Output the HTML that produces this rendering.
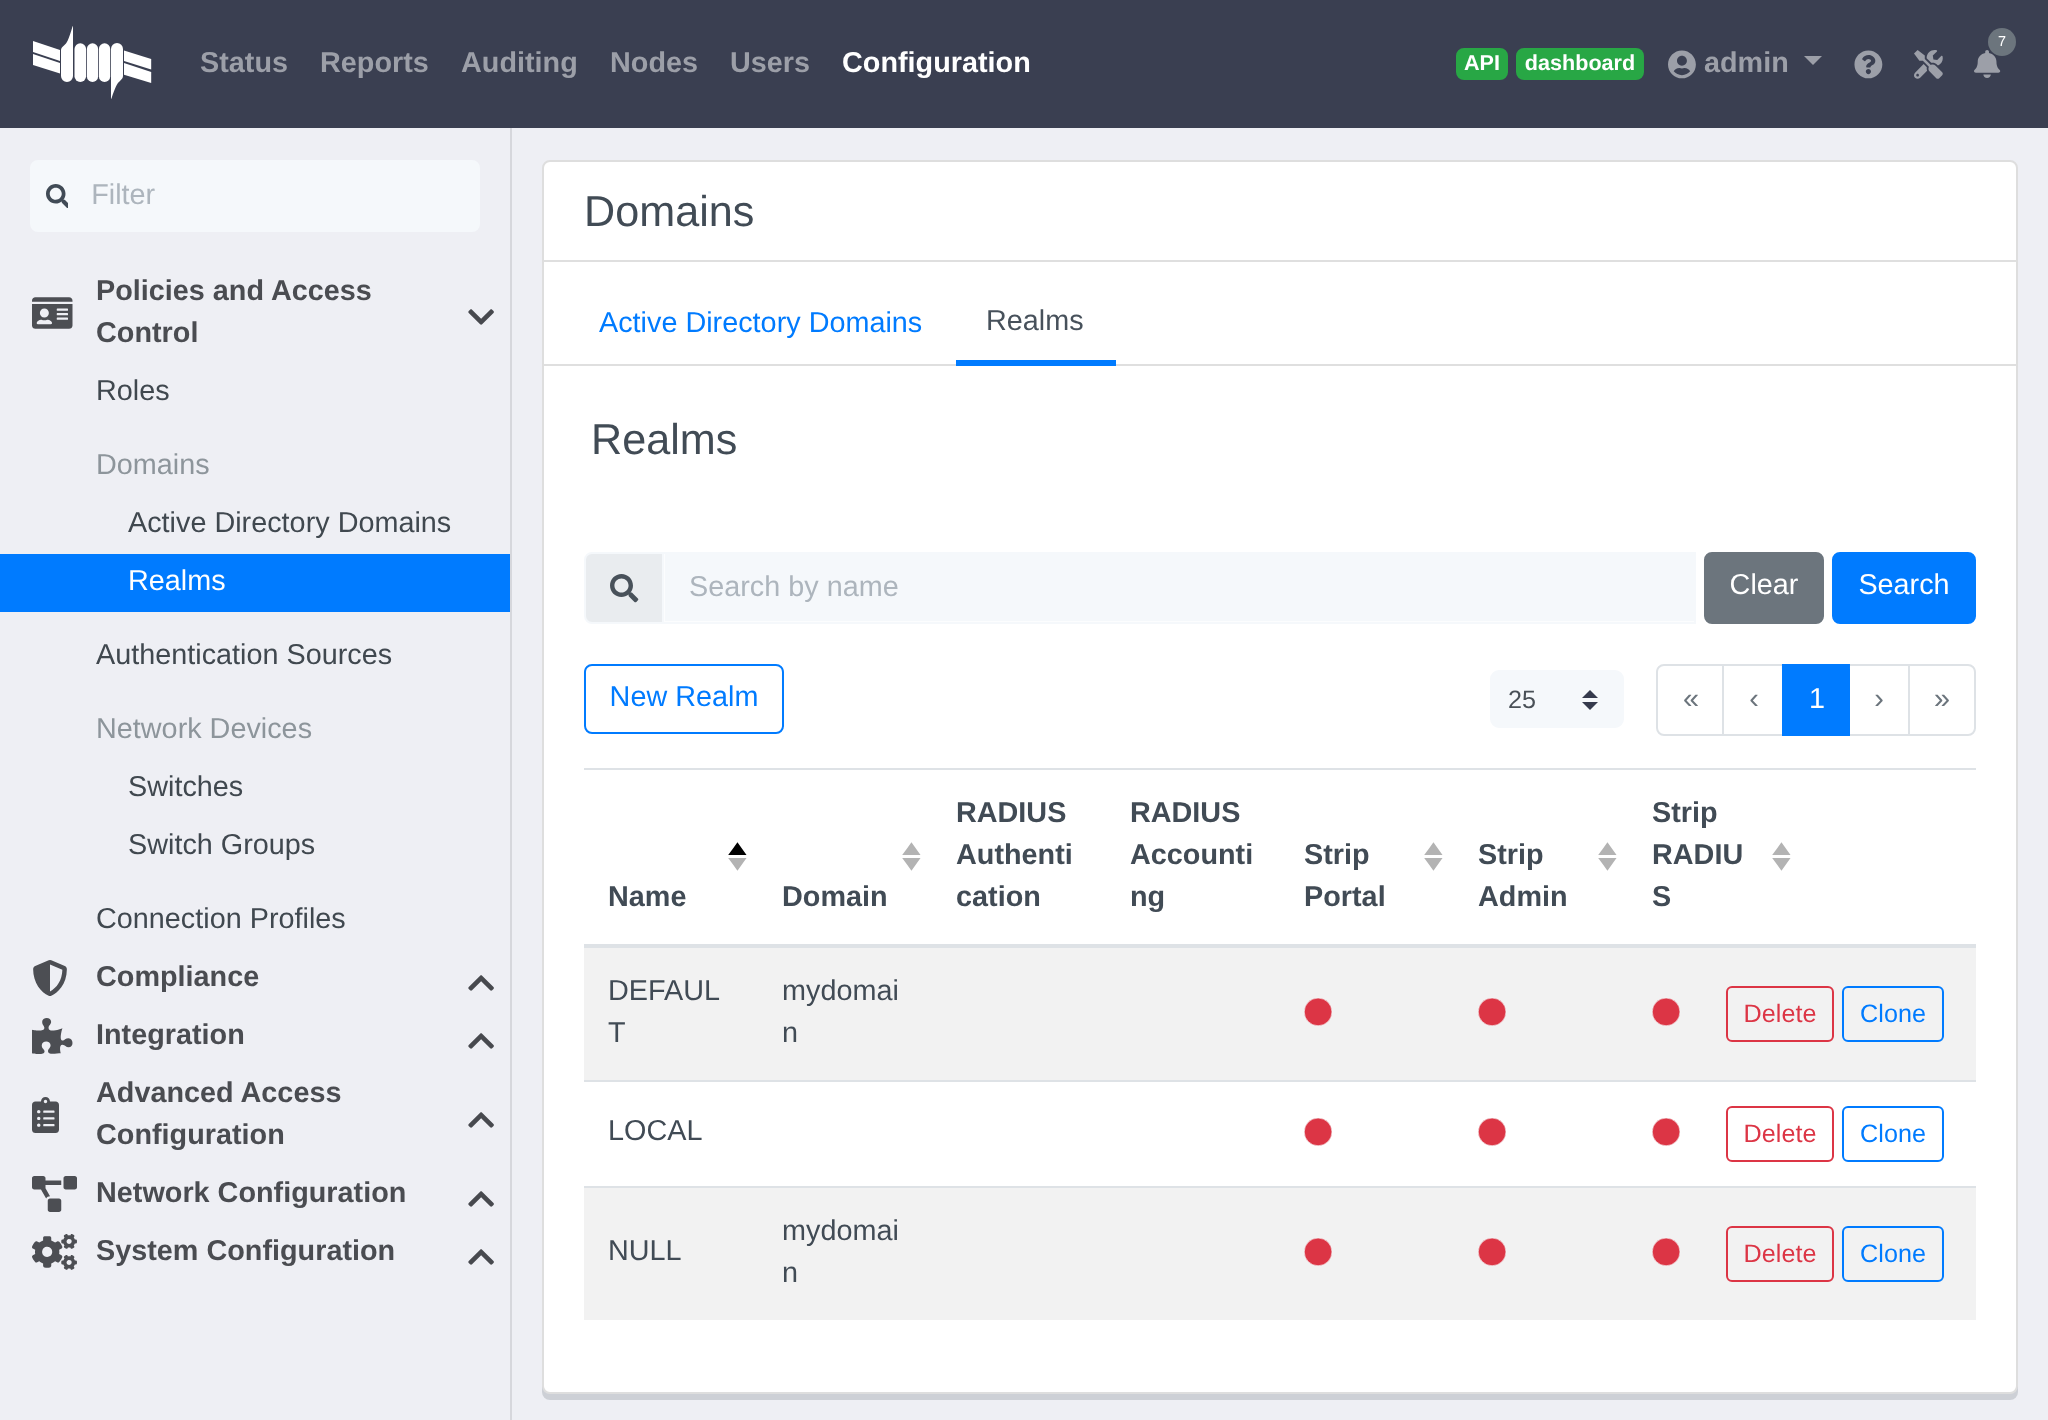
<!DOCTYPE html>
<html>
<head>
<meta charset="utf-8">
<title>Realms</title>
<style>
*{box-sizing:border-box;margin:0;padding:0}
html,body{width:2048px;height:1420px;overflow:hidden}
body{font-family:"Liberation Sans",sans-serif;font-size:28.8px;line-height:43.2px;color:#414b55;background:#eeeff4;position:relative}
.abs{position:absolute}
svg{display:block;overflow:visible}
#nav,#side,#card{will-change:transform}
#nav div,#side div,#card div{transform:matrix(1,0,0.0006,1,0,0)}
/* NAVBAR */
#nav{position:absolute;left:0;top:0;width:2048px;height:128px;background:#3a3f51}
#nav .lnk{position:absolute;top:41px;height:42px;line-height:42px;font-weight:bold;color:#9c9fa8;white-space:nowrap}
#nav .lnk.act{color:#fff}
.badge{position:absolute;top:48px;height:32px;line-height:29px;border-radius:8px;background:#28a745;color:#fff;font-weight:bold;font-size:21.6px;text-align:center;white-space:nowrap}
/* SIDEBAR */
#side{position:absolute;left:0;top:128px;width:512px;height:1292px;border-right:2px solid #d6d7dc}
#filter{position:absolute;left:30px;top:32px;width:450px;height:72px;border-radius:8px;background:#f5f8fb}
#filter span{position:absolute;left:61.2px;top:13.2px;color:#adb5bd;line-height:42px}
.si{position:absolute;left:0;width:510px;height:58px;line-height:42px;padding-top:5px;white-space:nowrap;color:#40484f}
.si.l1{padding-left:96px}
.si.l2{padding-left:128px}
.si.mut{color:#8d959b}
.si.sec{font-weight:bold;color:#4a4c51}
.si.act{color:#fff}
.sico{position:absolute;fill:#4c4e53}
.chev{position:absolute;left:468px;fill:#47494e}
/* CARD */
#card{position:absolute;left:542px;top:160px;width:1476px;height:1234px;background:#fff;border:2px solid #dedede;border-radius:8px;box-shadow:0 6px 0 #cdd0d6}
h4{font-weight:normal;font-size:43.2px;line-height:51.84px;position:absolute;white-space:nowrap}
.hline{position:absolute;left:0;width:1472px;height:2px;background:#dfdfdf}
.tab{position:absolute;line-height:43.2px;white-space:nowrap}
/* search */
.btn{position:absolute;border-radius:8px;text-align:center;white-space:nowrap}
/* table */
#tbl{position:absolute;left:39px;top:606px;width:1392px}
.tr{position:absolute;left:0;width:1392px}
.th{position:absolute;font-weight:bold;line-height:42px;white-space:nowrap}
.td{position:absolute;line-height:42px;white-space:nowrap}
.dot{position:absolute;width:27px;height:27px;border-radius:50%;background:#dc3545}
.bsm{position:absolute;height:56px;border-radius:6px;border:2px solid;font-size:25.2px;line-height:36px;padding-top:7px;text-align:center}
.bsm.del{width:108px;color:#dc3545;border-color:#dc3545}
.bsm.cln{width:102px;color:#007bff;border-color:#007bff}
.sort{position:absolute;width:20px;height:29px}
</style>
</head>
<body>
<div id="nav">
<svg class="abs" style="left:0;top:0" width="200" height="128" viewBox="0 0 200 128" fill="#fff">
<polygon points="33,41 60,50 60,61 33,52"/>
<polygon points="33,54 60,63 60,73.5 33,65"/>
<path d="M61,50 C61,48 62.5,47 64,45.5 C67,43 68.5,40 72.6,26.2 L73,26.2 L73,76 A6,6 0 0 1 61,76 Z"/>
<rect x="74.5" y="43.3" width="11.6" height="38.7" rx="5.8"/>
<rect x="86.9" y="43.3" width="11.2" height="38.7" rx="5.6"/>
<rect x="98.9" y="43.3" width="11.3" height="38.7" rx="5.6"/>
<path d="M111,49 A6,6 0 0 1 123,49 L123,76 C123,78 121.5,79.5 120,81 C117,83.5 115.5,86.5 111.4,98.8 L111,98.8 Z"/>
<polygon points="124,50.6 151.2,59.1 151.2,69.5 124,61"/>
<polygon points="124,63 151.2,72.1 151.2,83 124,74.7"/>
</svg>
<div class="lnk" style="left:200px">Status</div>
<div class="lnk" style="left:320px">Reports</div>
<div class="lnk" style="left:461px">Auditing</div>
<div class="lnk" style="left:610px">Nodes</div>
<div class="lnk" style="left:730px">Users</div>
<div class="lnk act" style="left:842px">Configuration</div>
<div class="badge" style="left:1456px;width:52px">API</div>
<div class="badge" style="left:1516px;width:128px">dashboard</div>
<svg class="abs" style="left:1668px;top:49.6px;fill:#9c9fa8" width="27.9" height="28.8" viewBox="0 0 496 512"><path d="M248 8C111 8 0 119 0 256s111 248 248 248 248-111 248-248S385 8 248 8zm0 96c48.600 0 88 39.400 88 88s-39.400 88-88 88-88-39.400-88-88 39.400-88 88-88zm0 344c-58.700 0-111.300-26.600-146.500-68.200 18.800-35.400 55.600-59.800 98.500-59.800 2.400 0 4.800.400 7.100 1.100 13 4.200 26.600 6.900 40.900 6.900 14.300 0 28-2.700 40.900-6.900 2.300-.700 4.700-1.100 7.100-1.100 42.900 0 79.700 24.400 98.500 59.800C359.300 421.400 306.700 448 248 448z"/></svg>
<div class="lnk" style="left:1704px">admin</div>
<svg class="abs" style="left:1804px;top:56px;fill:#9c9fa8" width="18" height="9" viewBox="0 0 18 9"><path d="M0 0h18l-9 9z"/></svg>
<svg class="abs" style="left:1853.6px;top:49.6px;fill:#9c9fa8" width="28.8" height="28.8" viewBox="0 0 512 512"><path d="M504 256c0 136.997-111.043 248-248 248S8 392.997 8 256C8 119.083 119.043 8 256 8s248 111.083 248 248zM262.655 90c-54.497 0-89.255 22.957-116.549 63.758-3.536 5.286-2.353 12.415 2.715 16.258l34.699 26.310c5.205 3.947 12.621 3.008 16.665-2.122 17.864-22.658 30.113-35.797 57.303-35.797 20.429 0 45.698 13.148 45.698 32.958 0 14.976-12.363 22.667-32.534 33.976C247.128 238.528 216 254.941 216 296v4c0 6.627 5.373 12 12 12h56c6.627 0 12-5.373 12-12v-1.333c0-28.462 83.186-29.647 83.186-106.667 0-58.002-60.165-102-116.531-102zM256 338c-25.365 0-46 20.635-46 46 0 25.364 20.635 46 46 46s46-20.636 46-46c0-25.365-20.635-46-46-46z"/></svg>
<svg class="abs" style="left:1913.6px;top:49.6px;fill:#9c9fa8" width="28.8" height="28.8" viewBox="0 0 512 512"><path d="M501.100 395.700L384 278.600c-23.100-23.100-57.600-27.600-85.400-13.900L192 158.100V96L64 0 0 64l96 128h62.100l106.600 106.600c-13.600 27.800-9.200 62.300 13.900 85.400l117.100 117.100c14.600 14.600 38.200 14.600 52.700 0l52.700-52.700c14.500-14.600 14.500-38.200 0-52.700zM331.700 225c28.300 0 54.900 11 74.900 31l19.400 19.400c15.800-6.900 30.800-16.500 43.800-29.500 37.100-37.100 49.700-89.300 37.900-136.700-2.200-9-13.500-12.100-20.100-5.500l-74.400 74.400-67.900-11.300L334 98.900l74.400-74.400c6.600-6.600 3.400-17.900-5.700-20.200-47.400-11.700-99.600.9-136.600 37.900-28.500 28.500-41.900 66.100-41.200 103.600l82.100 82.100c8.100-1.900 16.500-2.900 24.700-2.900zm-103.900 82l-56.700-56.700L18.700 402.800c-25 25-25 65.500 0 90.500s65.500 25 90.500 0l123.600-123.600c-7.600-19.900-9.900-41.600-5-62.700zM64 472c-13.200 0-24-10.800-24-24 0-13.300 10.700-24 24-24s24 10.700 24 24c0 13.200-10.700 24-24 24z"/></svg>
<svg class="abs" style="left:1973.9px;top:49.6px;fill:#9c9fa8" width="26.2" height="28.1" viewBox="0 0 448 512" preserveAspectRatio="none"><path d="M224 512c35.320 0 63.970-28.650 63.970-64H160.030c0 35.350 28.650 64 63.970 64zm215.390-149.710c-19.320-20.760-55.470-51.990-55.470-154.290 0-77.700-54.480-139.900-127.940-155.160V32c0-17.670-14.320-32-31.980-32s-31.980 14.330-31.980 32v20.840C118.560 68.100 64.080 130.300 64.080 208c0 102.300-36.150 133.530-55.470 154.290-6 6.450-8.660 14.160-8.610 21.710.110 16.400 12.980 32 32.100 32h383.800c19.120 0 32-15.600 32.100-32 .050-7.550-2.610-15.270-8.610-21.710z"/></svg>
<div class="abs" style="left:1988px;top:28px;width:28px;height:28px;border-radius:50%;background:#6c757d;color:#fff;font-size:14.4px;line-height:26px;text-align:center">7</div>
</div>
<div id="side">
<div id="filter"><div class="abs" style="left:16px;top:24px;width:22px;height:24px;overflow:hidden"><svg class="sico" style="left:0px;top:0.0px;fill:#414b56" width="24.00" height="24" viewBox="0 0 512 512"><path d="M505 442.700L405.300 343c-4.500-4.500-10.600-7-17-7H372c27.600-35.300 44-79.700 44-128C416 93.100 322.900 0 208 0S0 93.100 0 208s93.100 208 208 208c48.300 0 92.700-16.400 128-44v16.300c0 6.400 2.500 12.500 7 17l99.700 99.700c9.400 9.400 24.600 9.400 33.900 0l28.300-28.300c9.400-9.400 9.400-24.600.100-34zM208 336c-70.700 0-128-57.200-128-128 0-70.700 57.200-128 128-128 70.700 0 128 57.200 128 128 0 70.700-57.200 128-128 128z"/></svg></div><span>Filter</span></div>
<div class="si sec l1" style="top:136px;height:100px">Policies and Access<br>Control</div>
<svg class="sico" style="left:32px;top:167.2px" width="40.50" height="36" viewBox="0 0 576 512"><path d="M528 32H48C21.500 32 0 53.500 0 80v16h576V80c0-26.500-21.500-48-48-48zM0 432c0 26.500 21.500 48 48 48h480c26.500 0 48-21.500 48-48V128H0v304zm352-232c0-4.400 3.600-8 8-8h144c4.400 0 8 3.600 8 8v16c0 4.400-3.600 8-8 8H360c-4.400 0-8-3.600-8-8v-16zm0 64c0-4.400 3.600-8 8-8h144c4.400 0 8 3.600 8 8v16c0 4.400-3.600 8-8 8H360c-4.400 0-8-3.600-8-8v-16zm0 64c0-4.400 3.600-8 8-8h144c4.400 0 8 3.600 8 8v16c0 4.400-3.600 8-8 8H360c-4.400 0-8-3.600-8-8v-16zM176 192c35.300 0 64 28.700 64 64s-28.700 64-64 64-64-28.700-64-64 28.700-64 64-64zM67.100 396.200C75.500 370.500 99.600 352 128 352h8.200c12.300 5.100 25.700 8 39.800 8s27.600-2.900 39.800-8h8.200c28.400 0 52.500 18.500 60.900 44.200 3.200 9.900-5.200 19.800-15.600 19.800H82.700c-10.400 0-18.800-10-15.600-19.800z"/></svg>
<svg class="chev" style="left:468.3px;top:174.2px" width="26.25" height="30" viewBox="0 0 448 512"><path d="M207.029 381.476L12.686 187.132c-9.373-9.373-9.373-24.569 0-33.941l22.667-22.667c9.357-9.357 24.522-9.375 33.901-.040L224 284.505l154.745-154.021c9.379-9.335 24.544-9.317 33.901.040l22.667 22.667c9.373 9.373 9.373 24.569 0 33.941L240.971 381.476c-9.373 9.372-24.569 9.372-33.942 0z"/></svg>
<div class="si l1" style="top:236px;height:58px">Roles</div>
<div class="si l1 mut" style="top:310px;height:58px">Domains</div>
<div class="si l2" style="top:368px;height:58px">Active Directory Domains</div>
<span style="display:block;position:absolute;left:0;top:426px;width:510px;height:58px;background:#007bff"></span>
<div class="si l2 act" style="top:426px;height:58px">Realms</div>
<div class="si l1" style="top:500px;height:58px">Authentication Sources</div>
<div class="si l1 mut" style="top:574px;height:58px">Network Devices</div>
<div class="si l2" style="top:632px;height:58px">Switches</div>
<div class="si l2" style="top:690px;height:58px">Switch Groups</div>
<div class="si l1" style="top:764px;height:58px">Connection Profiles</div>
<div class="si sec l1" style="top:822px;height:58px">Compliance</div>
<svg class="sico" style="left:32px;top:832.2px" width="36.00" height="36" viewBox="0 0 512 512"><path d="M466.500 83.700l-192-80a48.150 48.150 0 0 0-36.900 0l-192 80C27.700 91.100 16 108.600 16 128c0 198.500 114.500 335.700 221.500 380.300 11.800 4.900 25.100 4.900 36.900 0C360.100 472.600 496 349.300 496 128c0-19.400-11.700-36.900-29.500-44.300zM256.100 446.300l-.1-381 175.900 73.300c-3.300 151.400-82.100 261.100-175.800 307.700z"/></svg>
<svg class="chev" style="left:468.3px;top:840.3px;transform:scaleY(-1)" width="26.25" height="30" viewBox="0 0 448 512"><path d="M207.029 381.476L12.686 187.132c-9.373-9.373-9.373-24.569 0-33.941l22.667-22.667c9.357-9.357 24.522-9.375 33.901-.040L224 284.505l154.745-154.021c9.379-9.335 24.544-9.317 33.901.040l22.667 22.667c9.373 9.373 9.373 24.569 0 33.941L240.971 381.476c-9.373 9.372-24.569 9.372-33.942 0z"/></svg>
<div class="si sec l1" style="top:880px;height:58px">Integration</div>
<svg class="sico" style="left:32px;top:890.2px" width="40.50" height="36" viewBox="0 0 576 512"><path d="M519.442 288.651c-41.519 0-59.500 31.593-82.058 31.593C377.409 320.244 432 144 432 144s-196.288 80-196.288-3.297c0-35.827 36.288-46.250 36.288-85.985C272 19.216 243.885 0 210.539 0c-34.654 0-66.366 18.891-66.366 56.346 0 41.364 31.711 59.277 31.711 81.750C175.885 207.719 0 166.758 0 166.758v333.237s178.635 41.047 178.635-28.662c0-22.473-40-40.107-40-81.471 0-37.456 29.250-56.346 63.577-56.346 33.673 0 61.788 19.216 61.788 54.717 0 39.735-36.288 50.158-36.288 85.985 0 60.803 129.675 25.730 181.230 25.730 0 0-34.725-120.101 25.827-120.101 35.962 0 46.423 36.152 86.308 36.152C556.712 416 576 387.990 576 354.443c0-34.199-18.962-65.792-56.558-65.792z"/></svg>
<svg class="chev" style="left:468.3px;top:898.3px;transform:scaleY(-1)" width="26.25" height="30" viewBox="0 0 448 512"><path d="M207.029 381.476L12.686 187.132c-9.373-9.373-9.373-24.569 0-33.941l22.667-22.667c9.357-9.357 24.522-9.375 33.901-.040L224 284.505l154.745-154.021c9.379-9.335 24.544-9.317 33.901.040l22.667 22.667c9.373 9.373 9.373 24.569 0 33.941L240.971 381.476c-9.373 9.372-24.569 9.372-33.942 0z"/></svg>
<div class="si sec l1" style="top:938px;height:100px">Advanced Access<br>Configuration</div>
<svg class="sico" style="left:32px;top:969.2px" width="27.00" height="36" viewBox="0 0 384 512"><path d="M336 64h-80c0-35.300-28.700-64-64-64s-64 28.700-64 64H48C21.500 64 0 85.500 0 112v352c0 26.500 21.500 48 48 48h288c26.500 0 48-21.500 48-48V112c0-26.500-21.500-48-48-48zM96 424c-13.300 0-24-10.700-24-24s10.700-24 24-24 24 10.700 24 24-10.700 24-24 24zm0-96c-13.300 0-24-10.700-24-24s10.700-24 24-24 24 10.700 24 24-10.700 24-24 24zm0-96c-13.300 0-24-10.700-24-24s10.700-24 24-24 24 10.700 24 24-10.700 24-24 24zm96-192c13.300 0 24 10.700 24 24s-10.700 24-24 24-24-10.700-24-24 10.700-24 24-24zm128 368c0 4.400-3.600 8-8 8H168c-4.400 0-8-3.600-8-8v-16c0-4.400 3.600-8 8-8h144c4.400 0 8 3.600 8 8v16zm0-96c0 4.400-3.600 8-8 8H168c-4.400 0-8-3.600-8-8v-16c0-4.400 3.600-8 8-8h144c4.400 0 8 3.600 8 8v16zm0-96c0 4.400-3.600 8-8 8H168c-4.400 0-8-3.600-8-8v-16c0-4.400 3.600-8 8-8h144c4.400 0 8 3.600 8 8v16z"/></svg>
<svg class="chev" style="left:468.3px;top:977.3px;transform:scaleY(-1)" width="26.25" height="30" viewBox="0 0 448 512"><path d="M207.029 381.476L12.686 187.132c-9.373-9.373-9.373-24.569 0-33.941l22.667-22.667c9.357-9.357 24.522-9.375 33.901-.040L224 284.505l154.745-154.021c9.379-9.335 24.544-9.317 33.901.040l22.667 22.667c9.373 9.373 9.373 24.569 0 33.941L240.971 381.476c-9.373 9.372-24.569 9.372-33.942 0z"/></svg>
<div class="si sec l1" style="top:1038px;height:58px">Network Configuration</div>
<svg class="sico" style="left:32px;top:1048.2px" width="45.00" height="36" viewBox="0 0 640 512"><path d="M384 320H256c-17.670 0-32 14.330-32 32v128c0 17.670 14.330 32 32 32h128c17.670 0 32-14.330 32-32V352c0-17.670-14.330-32-32-32zM192 32c0-17.670-14.330-32-32-32H32C14.330 0 0 14.330 0 32v128c0 17.670 14.330 32 32 32h95.720l73.160 128.040C211.980 300.980 232.400 288 256 288h.280L192 175.510V128h224V64H192V32zM608 0H480c-17.670 0-32 14.330-32 32v128c0 17.670 14.330 32 32 32h128c17.670 0 32-14.330 32-32V32c0-17.670-14.330-32-32-32z"/></svg>
<svg class="chev" style="left:468.3px;top:1056.3px;transform:scaleY(-1)" width="26.25" height="30" viewBox="0 0 448 512"><path d="M207.029 381.476L12.686 187.132c-9.373-9.373-9.373-24.569 0-33.941l22.667-22.667c9.357-9.357 24.522-9.375 33.901-.040L224 284.505l154.745-154.021c9.379-9.335 24.544-9.317 33.901.040l22.667 22.667c9.373 9.373 9.373 24.569 0 33.941L240.971 381.476c-9.373 9.372-24.569 9.372-33.942 0z"/></svg>
<div class="si sec l1" style="top:1096px;height:58px">System Configuration</div>
<svg class="sico" style="left:32px;top:1106.2px" width="45.00" height="36" viewBox="0 0 640 512"><path d="M512.100 191l-8.200 14.300c-3 5.300-9.400 7.500-15.100 5.400-11.800-4.400-22.600-10.700-32.100-18.600-4.600-3.800-5.800-10.500-2.800-15.700l8.200-14.300c-6.900-8-12.300-17.300-15.900-27.400h-16.500c-6 0-11.200-4.300-12.200-10.300-2-12-2.100-24.600 0-37.100 1-6 6.200-10.400 12.200-10.400h16.500c3.600-10.100 9-19.400 15.900-27.400l-8.200-14.300c-3-5.200-1.900-11.900 2.800-15.700 9.500-7.900 20.400-14.200 32.100-18.600 5.700-2.100 12.100.1 15.100 5.400l8.200 14.300c10.500-1.900 21.200-1.900 31.700 0L552 6.300c3-5.300 9.400-7.500 15.100-5.400 11.800 4.400 22.600 10.700 32.100 18.600 4.600 3.800 5.800 10.500 2.800 15.700l-8.200 14.300c6.900 8 12.300 17.300 15.900 27.400h16.500c6 0 11.200 4.300 12.200 10.300 2 12 2.100 24.600 0 37.100-1 6-6.200 10.400-12.200 10.400h-16.500c-3.600 10.100-9 19.400-15.900 27.400l8.200 14.300c3 5.200 1.900 11.900-2.800 15.700-9.500 7.900-20.400 14.200-32.100 18.600-5.700 2.100-12.100-.1-15.100-5.400l-8.200-14.300c-10.400 1.900-21.200 1.900-31.700 0zm-10.500-58.800c38.500 29.600 82.400-14.300 52.800-52.800-38.500-29.700-82.400 14.300-52.800 52.800zM386.300 286.100l33.700 16.800c10.100 5.800 14.500 18.100 10.500 29.100-8.900 24.200-26.400 46.400-42.600 65.800-7.400 8.900-20.200 11.100-30.300 5.300l-29.100-16.800c-16 13.700-34.600 24.600-54.900 31.700v33.600c0 11.600-8.300 21.600-19.700 23.600-24.600 4.200-50.400 4.400-75.900 0-11.500-2-20-11.900-20-23.600V418c-20.300-7.200-38.900-18-54.900-31.700L74 403c-10 5.800-22.900 3.600-30.300-5.300-16.200-19.400-33.300-41.600-42.200-65.700-4-10.900.4-23.200 10.500-29.100l33.300-16.800c-3.900-20.900-3.900-42.400 0-63.400L12 205.800c-10.100-5.800-14.600-18.100-10.500-29 8.900-24.200 26-46.400 42.200-65.800 7.400-8.900 20.200-11.100 30.300-5.300l29.100 16.800c16-13.700 34.600-24.600 54.900-31.700V57.100c0-11.500 8.200-21.500 19.600-23.500 24.600-4.200 50.500-4.400 76-.1 11.500 2 20 11.900 20 23.600v33.600c20.300 7.200 38.900 18 54.900 31.700l29.100-16.800c10-5.800 22.900-3.600 30.300 5.300 16.200 19.400 33.200 41.600 42.100 65.800 4 10.900.1 23.200-10 29.100l-33.700 16.800c3.900 21 3.900 42.500 0 63.500zm-117.600 21.100c59.200-77-28.700-164.900-105.700-105.700-59.200 77 28.700 164.900 105.700 105.700zm243.400 182.700l-8.200 14.300c-3 5.300-9.400 7.500-15.100 5.400-11.800-4.400-22.600-10.700-32.100-18.600-4.600-3.800-5.800-10.500-2.800-15.700l8.200-14.300c-6.900-8-12.300-17.300-15.900-27.400h-16.500c-6 0-11.200-4.300-12.200-10.300-2-12-2.100-24.600 0-37.100 1-6 6.200-10.400 12.200-10.400h16.500c3.600-10.100 9-19.400 15.900-27.400l-8.200-14.300c-3-5.200-1.900-11.900 2.800-15.700 9.500-7.900 20.400-14.200 32.100-18.600 5.700-2.100 12.100.1 15.100 5.400l8.200 14.300c10.500-1.900 21.200-1.900 31.700 0l8.200-14.300c3-5.300 9.400-7.500 15.100-5.400 11.800 4.400 22.600 10.700 32.100 18.600 4.600 3.800 5.800 10.500 2.800 15.700l-8.200 14.300c6.900 8 12.300 17.300 15.900 27.400h16.500c6 0 11.200 4.300 12.200 10.300 2 12 2.100 24.600 0 37.100-1 6-6.200 10.400-12.200 10.400h-16.500c-3.600 10.100-9 19.400-15.900 27.400l8.200 14.300c3 5.200 1.900 11.900-2.800 15.700-9.500 7.900-20.400 14.200-32.100 18.600-5.700 2.100-12.100-.1-15.100-5.400l-8.200-14.300c-10.400 1.900-21.200 1.900-31.700 0zM501.600 431c38.500 29.600 82.400-14.300 52.800-52.800-38.500-29.600-82.400 14.300-52.800 52.800z"/></svg>
<svg class="chev" style="left:468.3px;top:1114.3px;transform:scaleY(-1)" width="26.25" height="30" viewBox="0 0 448 512"><path d="M207.029 381.476L12.686 187.132c-9.373-9.373-9.373-24.569 0-33.941l22.667-22.667c9.357-9.357 24.522-9.375 33.901-.040L224 284.505l154.745-154.021c9.379-9.335 24.544-9.317 33.901.040l22.667 22.667c9.373 9.373 9.373 24.569 0 33.941L240.971 381.476c-9.373 9.372-24.569 9.372-33.942 0z"/></svg>
</div>
<div id="card">
<div style="position:absolute;left:40px;top:24px;line-height:50px;font-size:43.2px;white-space:nowrap;">Domains</div>
<div class="hline" style="top:98px"></div>
<div style="position:absolute;left:54.5px;top:138.8px;line-height:42px;font-size:28.8px;white-space:nowrap;color:#007bff">Active Directory Domains</div>
<div style="position:absolute;left:442px;top:137.3px;line-height:42px;font-size:28.8px;white-space:nowrap;color:#47515b">Realms</div>
<div class="hline" style="top:202px"></div>
<div class="abs" style="left:412px;top:198px;width:160px;height:6px;background:#007bff"></div>
<div style="position:absolute;left:46.8px;top:252.1px;line-height:50px;font-size:43.2px;white-space:nowrap;">Realms</div>
<div class="abs" style="left:40px;top:390px;width:80px;height:72px;background:#e9ecef;border:2px solid #f5f8fb;border-radius:8px 0 0 8px"></div>
<svg class="abs" style="left:65.7px;top:411.8px;fill:#48515a" width="28.3" height="28.3" viewBox="0 0 512 512"><path d="M505 442.700L405.300 343c-4.500-4.500-10.600-7-17-7H372c27.600-35.300 44-79.700 44-128C416 93.100 322.900 0 208 0S0 93.100 0 208s93.100 208 208 208c48.300 0 92.700-16.400 128-44v16.300c0 6.400 2.500 12.500 7 17l99.700 99.700c9.400 9.400 24.600 9.400 33.900 0l28.300-28.300c9.400-9.400 9.400-24.600.100-34zM208 336c-70.700 0-128-57.200-128-128 0-70.700 57.200-128 128-128 70.700 0 128 57.200 128 128 0 70.700-57.200 128-128 128z"/></svg>
<div class="abs" style="left:120px;top:390px;width:1032px;height:72px;background:#f5f8fb"></div>
<div class="abs" style="left:119.7px;top:392px;width:1.4px;height:68px;background:#fcfdfe"></div>
<div class="abs" style="left:120px;top:459px;width:1030px;height:1.3px;background:#fcfdfe"></div>
<div style="position:absolute;left:144.8px;top:403.2px;line-height:42px;font-size:28.8px;white-space:nowrap;color:#adb5bd">Search by name</div>
<div class="btn" style="left:1160px;top:390px;width:120px;height:72px;background:#6c757d;color:#fff;line-height:36px;padding-top:14px">Clear</div>
<div class="btn" style="left:1288px;top:390px;width:144px;height:72px;background:#007bff;color:#fff;line-height:36px;padding-top:14px">Search</div>
<div class="btn" style="left:40px;top:502px;width:200px;height:70px;border:2px solid #007bff;color:#007bff;line-height:36px;padding-top:12px">New Realm</div>
<div class="abs" style="left:946px;top:508px;width:134px;height:58px;background:#f5f8fb;border-radius:9px"></div>
<div style="position:absolute;left:964px;top:518.4px;line-height:38px;font-size:25.2px;white-space:nowrap;color:#495057">25</div>
<svg class="abs" style="left:1038px;top:528px;fill:#353a4c" width="16" height="20" viewBox="0 0 4 5"><path d="M2 0L0 2h4zm0 5L0 3h4z"/></svg>
<div class="abs" style="left:1112px;top:502px;width:320px;height:72px;border:2px solid #dee2e6;border-radius:8px"></div>
<div class="abs" style="left:1178px;top:504px;width:2px;height:68px;background:#dee2e6"></div>
<div class="abs" style="left:1364px;top:504px;width:2px;height:68px;background:#dee2e6"></div>
<div class="abs" style="left:1238px;top:502px;width:68px;height:72px;background:#007bff"></div>
<div class="abs" style="left:1106.7px;width:80px;text-align:center;top:518px;line-height:36px;color:#6c757d">«</div>
<div class="abs" style="left:1169.6px;width:80px;text-align:center;top:518px;line-height:36px;color:#6c757d">‹</div>
<div class="abs" style="left:1232.8px;width:80px;text-align:center;top:518px;line-height:36px;color:#fff">1</div>
<div class="abs" style="left:1295px;width:80px;text-align:center;top:518px;line-height:36px;color:#6c757d">›</div>
<div class="abs" style="left:1358px;width:80px;text-align:center;top:518px;line-height:36px;color:#6c757d">»</div>
<div class="abs" style="left:40px;top:606px;width:1392px;height:2px;background:#dee2e6"></div>
<div class="abs" style="left:40px;top:782px;width:1392px;height:4px;background:#dee2e6"></div>
<div class="abs" style="left:40px;top:786px;width:1392px;height:132px;background:#f2f2f2"></div>
<div class="abs" style="left:40px;top:918px;width:1392px;height:2px;background:#dee2e6"></div>
<div class="abs" style="left:40px;top:1024px;width:1392px;height:2px;background:#dee2e6"></div>
<div class="abs" style="left:40px;top:1026px;width:1392px;height:132px;background:#f2f2f2"></div>
<div style="position:absolute;left:64px;top:713px;line-height:42px;font-size:28.8px;white-space:nowrap;font-weight:bold;">Name</div>
<div style="position:absolute;left:238px;top:713px;line-height:42px;font-size:28.8px;white-space:nowrap;font-weight:bold;">Domain</div>
<div style="position:absolute;left:412px;top:629px;line-height:42px;font-size:28.8px;white-space:nowrap;font-weight:bold;">RADIUS<br>Authenti<br>cation</div>
<div style="position:absolute;left:586px;top:629px;line-height:42px;font-size:28.8px;white-space:nowrap;font-weight:bold;">RADIUS<br>Accounti<br>ng</div>
<div style="position:absolute;left:760px;top:671px;line-height:42px;font-size:28.8px;white-space:nowrap;font-weight:bold;">Strip<br>Portal</div>
<div style="position:absolute;left:934px;top:671px;line-height:42px;font-size:28.8px;white-space:nowrap;font-weight:bold;">Strip<br>Admin</div>
<div style="position:absolute;left:1108px;top:629px;line-height:42px;font-size:28.8px;white-space:nowrap;font-weight:bold;">Strip<br>RADIU<br>S</div>
<svg class="abs" style="left:184.38px;top:680.1px" width="18.72" height="28.8" viewBox="0 0 101 101" preserveAspectRatio="none"><path fill="#000" d="M51 1l25 23 24 22H1l25-22z"/><path fill="#b3b3b3" d="M51 101l25-23 24-22H1l25 22z"/></svg>
<svg class="abs" style="left:358.38px;top:680.1px" width="18.72" height="28.8" viewBox="0 0 101 101" preserveAspectRatio="none"><path fill="#b3b3b3" d="M51 1l25 23 24 22H1l25-22z"/><path fill="#b3b3b3" d="M51 101l25-23 24-22H1l25 22z"/></svg>
<svg class="abs" style="left:880.38px;top:680.1px" width="18.72" height="28.8" viewBox="0 0 101 101" preserveAspectRatio="none"><path fill="#b3b3b3" d="M51 1l25 23 24 22H1l25-22z"/><path fill="#b3b3b3" d="M51 101l25-23 24-22H1l25 22z"/></svg>
<svg class="abs" style="left:1054.38px;top:680.1px" width="18.72" height="28.8" viewBox="0 0 101 101" preserveAspectRatio="none"><path fill="#b3b3b3" d="M51 1l25 23 24 22H1l25-22z"/><path fill="#b3b3b3" d="M51 101l25-23 24-22H1l25 22z"/></svg>
<svg class="abs" style="left:1228.38px;top:680.1px" width="18.72" height="28.8" viewBox="0 0 101 101" preserveAspectRatio="none"><path fill="#b3b3b3" d="M51 1l25 23 24 22H1l25-22z"/><path fill="#b3b3b3" d="M51 101l25-23 24-22H1l25 22z"/></svg>
<div style="position:absolute;left:64px;top:807px;line-height:42px;font-size:28.8px;white-space:nowrap;">DEFAUL<br>T</div>
<div style="position:absolute;left:238px;top:807px;line-height:42px;font-size:28.8px;white-space:nowrap;">mydomai<br>n</div>
<div style="position:absolute;left:64px;top:947px;line-height:42px;font-size:28.8px;white-space:nowrap;">LOCAL</div>
<div style="position:absolute;left:64px;top:1066.5px;line-height:42px;font-size:28.8px;white-space:nowrap;">NULL</div>
<div style="position:absolute;left:238px;top:1047px;line-height:42px;font-size:28.8px;white-space:nowrap;">mydomai<br>n</div>
<svg class="abs" style="left:760px;top:835.6px" width="28.8" height="28.8" viewBox="0 0 28.8 28.8"><circle cx="14.1" cy="13.9" r="13.85" fill="#dc3545" stroke="#f6fbfb" stroke-width=".6"/></svg>
<svg class="abs" style="left:934px;top:835.6px" width="28.8" height="28.8" viewBox="0 0 28.8 28.8"><circle cx="14.1" cy="13.9" r="13.85" fill="#dc3545" stroke="#f6fbfb" stroke-width=".6"/></svg>
<svg class="abs" style="left:1108px;top:835.6px" width="28.8" height="28.8" viewBox="0 0 28.8 28.8"><circle cx="14.1" cy="13.9" r="13.85" fill="#dc3545" stroke="#f6fbfb" stroke-width=".6"/></svg>
<div class="bsm del" style="left:1182px;top:824px">Delete</div>
<div class="bsm cln" style="left:1298px;top:824px">Clone</div>
<svg class="abs" style="left:760px;top:955.6px" width="28.8" height="28.8" viewBox="0 0 28.8 28.8"><circle cx="14.1" cy="13.9" r="13.85" fill="#dc3545" stroke="#f6fbfb" stroke-width=".6"/></svg>
<svg class="abs" style="left:934px;top:955.6px" width="28.8" height="28.8" viewBox="0 0 28.8 28.8"><circle cx="14.1" cy="13.9" r="13.85" fill="#dc3545" stroke="#f6fbfb" stroke-width=".6"/></svg>
<svg class="abs" style="left:1108px;top:955.6px" width="28.8" height="28.8" viewBox="0 0 28.8 28.8"><circle cx="14.1" cy="13.9" r="13.85" fill="#dc3545" stroke="#f6fbfb" stroke-width=".6"/></svg>
<div class="bsm del" style="left:1182px;top:944px">Delete</div>
<div class="bsm cln" style="left:1298px;top:944px">Clone</div>
<svg class="abs" style="left:760px;top:1075.6px" width="28.8" height="28.8" viewBox="0 0 28.8 28.8"><circle cx="14.1" cy="13.9" r="13.85" fill="#dc3545" stroke="#f6fbfb" stroke-width=".6"/></svg>
<svg class="abs" style="left:934px;top:1075.6px" width="28.8" height="28.8" viewBox="0 0 28.8 28.8"><circle cx="14.1" cy="13.9" r="13.85" fill="#dc3545" stroke="#f6fbfb" stroke-width=".6"/></svg>
<svg class="abs" style="left:1108px;top:1075.6px" width="28.8" height="28.8" viewBox="0 0 28.8 28.8"><circle cx="14.1" cy="13.9" r="13.85" fill="#dc3545" stroke="#f6fbfb" stroke-width=".6"/></svg>
<div class="bsm del" style="left:1182px;top:1064px">Delete</div>
<div class="bsm cln" style="left:1298px;top:1064px">Clone</div>
</div>
</body>
</html>
